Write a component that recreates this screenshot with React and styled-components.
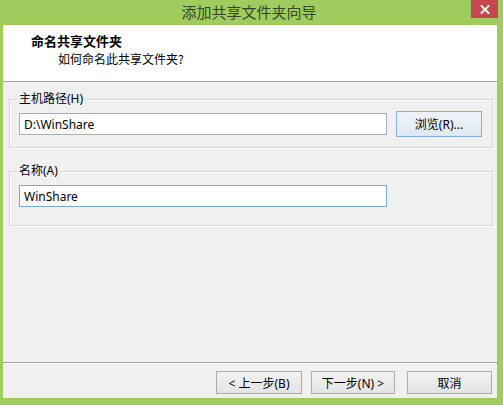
import React from "react";
import styled, { createGlobalStyle } from "styled-components";

const Global = createGlobalStyle`
  html, body { margin: 0; padding: 0; }
  body { width: 503px; height: 405px; overflow: hidden; }
  * { box-sizing: border-box; }
`;

const FONT = `"Noto Sans", "Noto Sans CJK SC", sans-serif`;

const Window = styled.div`
  width: 503px;
  height: 405px;
  background: #9fcd5d;
  display: flex;
  flex-direction: column;
  font-family: ${FONT};
  font-size: 12px;
  color: #000;
`;

const TitleBar = styled.div`
  height: 25px;
  display: grid;
  grid-template-columns: 1fr auto 1fr;
  align-items: start;
  padding-right: 5px;
`;

const Title = styled.div`
  grid-column: 2;
  font-size: 15px;
  line-height: 24px;
  color: #38452c;
  font-family: "Noto Sans CJK SC", sans-serif;
`;

const CloseButton = styled.div`
  grid-column: 3;
  justify-self: end;
  width: 27px;
  height: 18px;
  background: #c7474f;
  display: flex;
  align-items: center;
  justify-content: center;
`;

const Client = styled.div`
  flex: 1;
  margin: 0 6px 7px 3px;
  background: #f0f0f0;
  display: flex;
  flex-direction: column;
`;

const Header = styled.div`
  height: 57px;
  background: #fff;
  border-bottom: 1px solid #a0a0a0;
  padding: 8px 0 0 28px;
  display: flex;
  flex-direction: column;
  gap: 2px;
`;

const HeaderTitle = styled.div`
  font-family: "Noto Sans CJK SC", sans-serif;
  font-weight: 700;
  font-size: 13px;
  line-height: 16px;
`;

const HeaderSub = styled.div`
  font-family: "Noto Sans CJK SC", sans-serif;
  font-size: 12px;
  line-height: 16px;
  margin-left: 27px;
`;

const Body = styled.div`
  flex: 1;
  padding: 9px 4px 0 6px;
  display: flex;
  flex-direction: column;
  gap: 15px;
`;

const Group = styled.fieldset`
  margin: 0;
  border: 1px solid #d8d8d8;
  box-shadow: 1px 1px 0 #fff inset, 1px 1px 0 #fff;
  padding: 4px 10px ${(p) => p.$padBottom}px 9px;
  min-width: 0;
`;

const Legend = styled.legend`
  margin-left: -2px;
  padding: 0 2px;
  line-height: 16px;
  background: #f0f0f0;
  font-size: 12px;
`;

const Row = styled.div`
  display: flex;
  align-items: center;
  gap: 9px;
  height: 26px;
`;

const TextInput = styled.input`
  width: 368px;
  height: 22px;
  border: 1px solid ${(p) => (p.$focused ? "#7aa7d8" : "#abadb3")};
  background: #fff;
  font-family: ${FONT};
  font-size: 12px;
  padding: 0 4px;
  color: #000;
  outline: none;
`;

const Button = styled.button`
  width: ${(p) => p.$w}px;
  height: ${(p) => p.$h}px;
  border: 1px solid ${(p) => (p.$default ? "#7eb1e4" : "#acacac")};
  background: ${(p) =>
    p.$default
      ? "linear-gradient(#eef3f8, #dfe8f1)"
      : "linear-gradient(#f2f2f2, #e4e4e4)"};
  font-family: ${FONT};
  font-size: 12px;
  color: #000;
  padding: 0;
  display: flex;
  align-items: center;
  justify-content: center;
`;

const Footer = styled.div`
  border-top: 1px solid #a0a0a0;
  box-shadow: 0 1px 0 #fff inset;
  padding: 8px 5px 4px 0;
  display: flex;
  justify-content: flex-end;
  align-items: center;
`;

const NavGroup = styled.div`
  display: flex;
  gap: 9px;
  margin-right: 12px;
`;

export default function App() {
  return (
    <>
      <Global />
      <Window>
        <TitleBar>
          <Title>添加共享文件夹向导</Title>
          <CloseButton>
            <svg width="10" height="9" viewBox="0 0 10 9">
              <path d="M1.5 1 L8.5 8 M8.5 1 L1.5 8" stroke="#fff" strokeWidth="1.8" strokeLinecap="square" />
            </svg>
          </CloseButton>
        </TitleBar>
        <Client>
          <Header>
            <HeaderTitle>命名共享文件夹</HeaderTitle>
            <HeaderSub>如何命名此共享文件夹?</HeaderSub>
          </Header>
          <Body>
            <Group $padBottom={10}>
              <Legend>主机路径(H)</Legend>
              <Row>
                <TextInput defaultValue="D:\WinShare" readOnly />
                <Button $w={86} $h={26} $default>浏览(R)...</Button>
              </Row>
            </Group>
            <Group $padBottom={16}>
              <Legend>名称(A)</Legend>
              <Row>
                <TextInput $focused defaultValue="WinShare" readOnly />
              </Row>
            </Group>
          </Body>
          <Footer>
            <NavGroup>
              <Button $w={86} $h={23}>&lt; 上一步(B)</Button>
              <Button $w={84} $h={23}>下一步(N) &gt;</Button>
            </NavGroup>
            <Button $w={85} $h={23}>取消</Button>
          </Footer>
        </Client>
      </Window>
    </>
  );
}
